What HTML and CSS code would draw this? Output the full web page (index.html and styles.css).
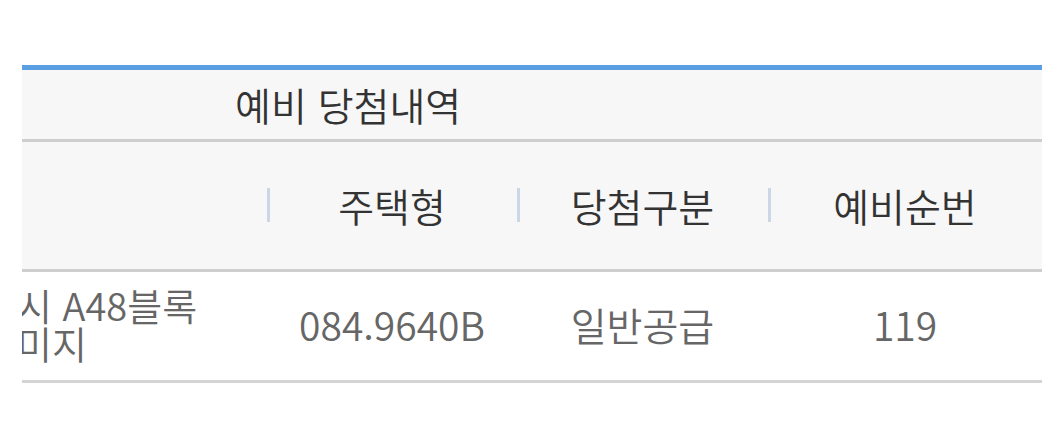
FILE: index.html
```html
<!DOCTYPE html>
<html lang="ko">
<head>
<meta charset="utf-8">
<title>예비 당첨내역</title>
<link rel="stylesheet" href="styles.css">
</head>
<body>
<section class="board">
  <div class="title-row">
    <h2 class="title">예비 당첨내역</h2>
  </div>
  <div class="row head">
    <div class="cell first"></div>
    <div class="cell sep">주택형</div>
    <div class="cell sep">당첨구분</div>
    <div class="cell sep">예비순번</div>
  </div>
  <div class="row body">
    <div class="cell first"><span class="clip">시 A48블록<br>미지</span></div>
    <div class="cell">084.9640B</div>
    <div class="cell">일반공급</div>
    <div class="cell">119</div>
  </div>
</section>
</body>
</html>
```
FILE: styles.css
```css
html, body {
  margin: 0;
  padding: 0;
  background: #ffffff;
}

body {
  font-family: "Noto Sans CJK KR", "Noto Sans", sans-serif;
  font-size: 39px;
  font-weight: 350;
}

.board {
  margin: 65px 20px 0 22px;
  border-top: 5px solid #5b9fe3;
  overflow: hidden;
}

.title-row {
  height: 69px;
  background: #f7f7f7;
  border-bottom: 3px solid #cecece;
  display: flex;
  align-items: center;
  padding-left: 213px;
}

.title {
  margin: 0;
  font-size: 39px;
  font-weight: 350;
  color: #333333;
  line-height: 1;
}

.row {
  display: grid;
  grid-template-columns: 245px 250px 251px 1fr;
}

.head {
  height: 127px;
  background: #f7f7f7;
  border-bottom: 3px solid #cecece;
  color: #333333;
}

.body {
  height: 108px;
  background: #ffffff;
  border-bottom: 3px solid #d4d4d4;
  color: #666666;
}

.cell {
  position: relative;
  display: flex;
  align-items: center;
  justify-content: center;
  text-align: center;
  line-height: 38px;
  white-space: nowrap;
  padding-bottom: 4px;
}

.head .cell {
  padding-bottom: 2px;
}

.cell.first {
  justify-content: flex-start;
  text-align: left;
  overflow: hidden;
}

.clip {
  display: block;
  margin-left: -5px;
  font-size: 38px;
  line-height: 38px;
}

.sep::before {
  content: "";
  position: absolute;
  left: 0;
  top: 50%;
  width: 3px;
  height: 34px;
  margin-top: -18px;
  background: #cbd6e7;
}
```
